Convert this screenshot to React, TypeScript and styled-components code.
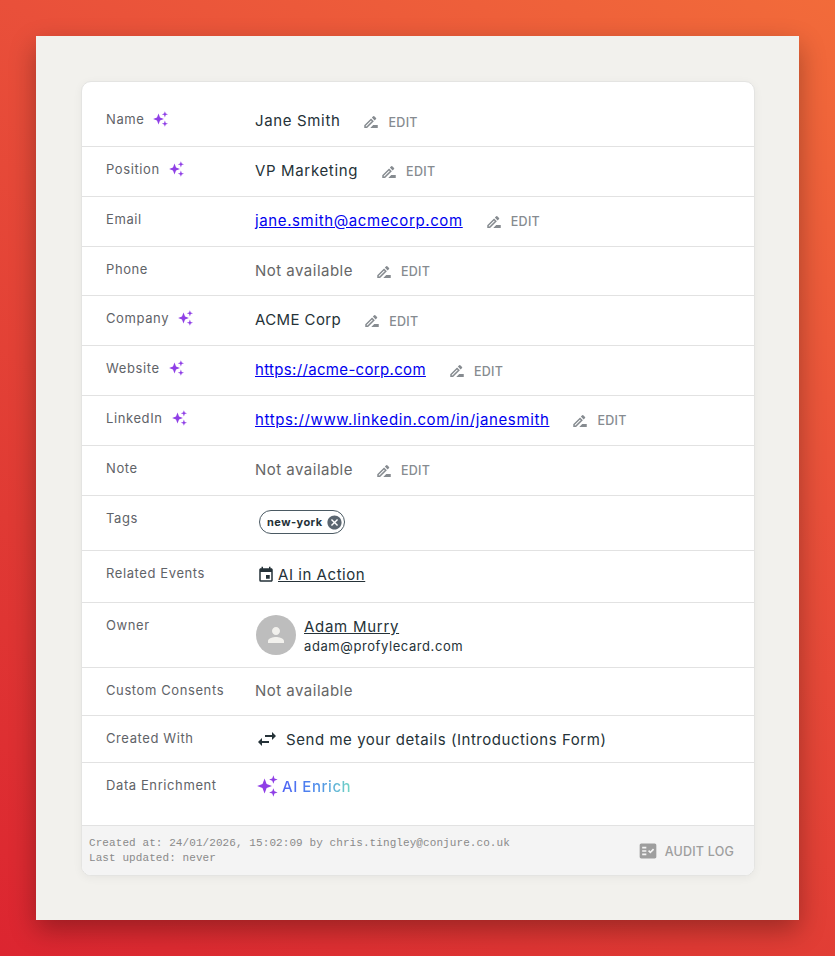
import styled, { createGlobalStyle } from "styled-components";
import { MdCancel, MdEvent, MdFactCheck, MdOutlineDriveFileRenameOutline, MdPerson, MdSwapHoriz } from "react-icons/md";

const GlobalStyle = createGlobalStyle`
    html, body {
        margin: 0;
        padding: 0;
    }
    body {
        width: 835px;
        height: 956px;
        overflow: hidden;
        font-family: "Inter", "Noto Sans", sans-serif;
    }
`;

const Page = styled.div`
    width: 835px;
    height: 956px;
    padding: 36px;
    box-sizing: border-box;
    background: linear-gradient(212deg, #f26b3a 0%, #e9503a 35%, #e03a34 70%, #dc2530 100%);
`;

const Sheet = styled.div`
    width: 763px;
    height: 884px;
    padding: 45px 45px 0 45px;
    box-sizing: border-box;
    background-color: #f2f1ed;
    box-shadow: 0 10px 25px rgba(0, 0, 0, 0.3);
`;

const Card = styled.div`
    width: 674px;
    height: 795px;
    box-sizing: border-box;
    display: flex;
    flex-direction: column;
    background-color: #fff;
    border: 1px solid #e4e4e2;
    border-radius: 10px;
    box-shadow: 0 2px 10px rgba(0, 0, 0, 0.05);
    overflow: hidden;
    padding-top: 15.3px;
`;

const Row = styled.div<{ $last?: boolean }>`
    display: grid;
    grid-template-columns: 149px 1fr;
    padding: ${props => (props.$last ? "12px 24px 24px" : "12px 24px")};
    border-bottom: ${props => (props.$last ? "0" : "1px solid #e2e2e2")};
    flex: ${props => (props.$last ? "1" : "none")};
`;

const Label = styled.div`
    display: flex;
    align-items: center;
    align-self: start;
    gap: 9px;
    height: 20px;
    font-size: 13px;
    letter-spacing: 0.6px;
    color: #5f6368;
`;

const Value = styled.div<{ $h?: number; $lift?: number; $ls?: number }>`
    display: flex;
    align-items: center;
    box-sizing: border-box;
    min-height: ${props => (props.$h || 23) + "px"};
    padding-bottom: ${props => (props.$lift ?? 2) + "px"};
    font-size: 15px;
    letter-spacing: ${props => (props.$ls ?? 0.55) + "px"};
    color: #253238;
`;

const Muted = styled.span`
    color: #666;
    letter-spacing: 0.48px;
`;

const Link = styled.a<{ $ls?: number }>`
    color: #0000ee;
    text-decoration: underline;
    letter-spacing: ${props => (props.$ls ?? 0.62) + "px"};
`;

const DarkLink = styled.a<{ $wide?: boolean }>`
    color: #253238;
    text-decoration: underline;
    letter-spacing: ${props => (props.$wide ? "0.72px" : "0.55px")};
`;

const EditButton = styled.span`
    display: inline-flex;
    align-items: center;
    gap: 8px;
    margin-left: 22px;
    padding-top: 3px;
    font-size: 12.5px;
    letter-spacing: 0.3px;
    font-weight: 500;
    color: #868b90;
    svg {
        width: 18px;
        height: 18px;
    }
`;

const Tag = styled.span`
    display: inline-flex;
    align-items: center;
    gap: 3px;
    height: 24px;
    margin-left: 4px;
    padding: 0 1px 0 7px;
    box-sizing: border-box;
    border: 1px solid #4b5a63;
    border-radius: 12px;
    font-size: 11px;
    font-weight: 700;
    letter-spacing: 0.45px;
    color: #253238;
    svg {
        width: 17px;
        height: 17px;
        color: #5b6670;
    }
`;

const EventIcon = styled(MdEvent)`
    width: 18px;
    height: 18px;
    margin: 0 3px 0 2px;
    color: #253238;
`;

const Avatar = styled.div`
    width: 40px;
    height: 40px;
    border-radius: 50%;
    display: flex;
    align-items: center;
    justify-content: center;
    margin: 0 8px 0 1px;
    background-color: #bdbdbd;
    color: #f2f1ed;
    svg {
        width: 24px;
        height: 24px;
    }
`;

const OwnerInfo = styled.div`
    display: flex;
    flex-direction: column;
    margin-top: 2px;
    line-height: 20px;
`;

const OwnerEmail = styled.span`
    font-size: 13px;
    letter-spacing: 0.58px;
    line-height: 18px;
`;

const SwapIcon = styled(MdSwapHoriz)`
    width: 24px;
    height: 24px;
    margin: -2px 7px -2px 0;
`;

const Enrich = styled.span`
    display: inline-flex;
    align-items: center;
    gap: 3px;
    margin-left: 2px;
    font-weight: 500;
    > span {
        background: linear-gradient(90deg, #4f63f5 0%, #4d8cec 50%, #72d6c4 100%);
        -webkit-background-clip: text;
        background-clip: text;
        color: transparent;
    }
`;

const Footer = styled.div`
    display: flex;
    align-items: center;
    justify-content: space-between;
    height: 50px;
    padding: 1px 20px 0 7px;
    box-sizing: border-box;
    background-color: #f4f4f4;
    border-top: 1px solid #e2e2e2;
`;

const Meta = styled.div`
    font-family: "Liberation Mono", "DejaVu Sans Mono", monospace;
    font-size: 11px;
    letter-spacing: 0.08px;
    line-height: 15px;
    color: #8a8a8a;
`;

const AuditButton = styled.span`
    display: inline-flex;
    align-items: center;
    gap: 7px;
    font-size: 12.5px;
    font-weight: 500;
    letter-spacing: 0.2px;
    color: #9e9e9e;
    svg {
        width: 20px;
        height: 20px;
    }
`;

function Sparkles({ size = 16 }: { size?: number }) {
    return (
        <svg width={size} height={size} viewBox="0 0 16 16" fill="#8f3fe6" aria-hidden="true">
            <path d="M5.5 2.6 L7 6.5 L10.9 8 L7 9.5 L5.5 13.4 L4 9.5 L0.1 8 L4 6.5 Z" />
            <path d="M11.9 0.2 L12.7 2.5 L15 3.3 L12.7 4.1 L11.9 6.4 L11.1 4.1 L8.8 3.3 L11.1 2.5 Z" />
            <path d="M11.9 9.6 L12.7 11.9 L15 12.7 L12.7 13.5 L11.9 15.8 L11.1 13.5 L8.8 12.7 L11.1 11.9 Z" />
        </svg>
    );
}

function Edit() {
    return (
        <EditButton>
            <MdOutlineDriveFileRenameOutline />
            EDIT
        </EditButton>
    );
}

function App() {
    return (
        <>
            <GlobalStyle />
            <Page>
                <Sheet>
                    <Card>
                        <Row>
                            <Label>Name <Sparkles /></Label>
                            <Value $h={24.8} $ls={0.65}>Jane Smith<Edit /></Value>
                        </Row>
                        <Row>
                            <Label>Position <Sparkles /></Label>
                            <Value $h={24.8} $ls={0.65}>VP Marketing<Edit /></Value>
                        </Row>
                        <Row>
                            <Label>Email</Label>
                            <Value $h={24.8}><Link href="#">jane.smith@acmecorp.com</Link><Edit /></Value>
                        </Row>
                        <Row>
                            <Label>Phone</Label>
                            <Value $h={24.8}><Muted>Not available</Muted><Edit /></Value>
                        </Row>
                        <Row>
                            <Label>Company <Sparkles /></Label>
                            <Value $h={24.8} $ls={0.4}>ACME Corp<Edit /></Value>
                        </Row>
                        <Row>
                            <Label>Website <Sparkles /></Label>
                            <Value $h={24.8}><Link href="#" $ls={0.33}>https://acme-corp.com</Link><Edit /></Value>
                        </Row>
                        <Row>
                            <Label>LinkedIn <Sparkles /></Label>
                            <Value $h={24.8}><Link href="#">https://www.linkedin.com/in/janesmith</Link><Edit /></Value>
                        </Row>
                        <Row>
                            <Label>Note</Label>
                            <Value $h={24.8}><Muted>Not available</Muted><Edit /></Value>
                        </Row>
                        <Row>
                            <Label>Tags</Label>
                            <Value $h={30.8}><Tag>new-york <MdCancel /></Tag></Value>
                        </Row>
                        <Row>
                            <Label>Related Events</Label>
                            <Value $h={27} $lift={4}><EventIcon /><DarkLink href="#">AI in Action</DarkLink></Value>
                        </Row>
                        <Row>
                            <Label>Owner</Label>
                            <Value $h={40} $lift={0}>
                                <Avatar><MdPerson /></Avatar>
                                <OwnerInfo>
                                    <DarkLink href="#" $wide>Adam Murry</DarkLink>
                                    <OwnerEmail>adam@profylecard.com</OwnerEmail>
                                </OwnerInfo>
                            </Value>
                        </Row>
                        <Row>
                            <Label>Custom Consents</Label>
                            <Value><Muted>Not available</Muted></Value>
                        </Row>
                        <Row>
                            <Label>Created With</Label>
                            <Value $h={22} $lift={0}><SwapIcon />Send me your details (Introductions Form)</Value>
                        </Row>
                        <Row $last>
                            <Label>Data Enrichment</Label>
                            <Value $h={26} $lift={4}>
                                <Enrich><Sparkles size={22} /><span>AI Enrich</span></Enrich>
                            </Value>
                        </Row>
                        <Footer>
                            <Meta>
                                Created at: 24/01/2026, 15:02:09 by chris.tingley@conjure.co.uk<br />
                                Last updated: never
                            </Meta>
                            <AuditButton><MdFactCheck />AUDIT LOG</AuditButton>
                        </Footer>
                    </Card>
                </Sheet>
            </Page>
        </>
    );
}

export default App;
